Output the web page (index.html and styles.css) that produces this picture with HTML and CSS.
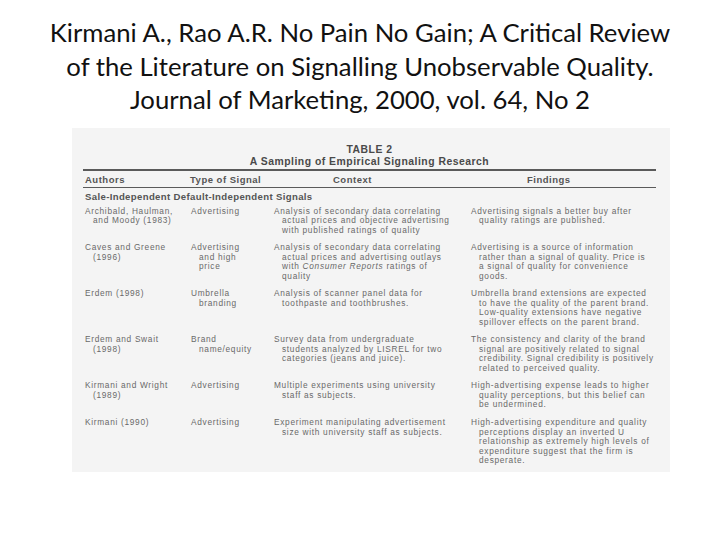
FILE: index.html
```html
<!DOCTYPE html>
<html>
<head>
<meta charset="utf-8">
<link rel="stylesheet" href="styles.css">
</head>
<body>
<div class="slide">
  <h1 class="title">Kirmani A., Rao A.R. No Pain No Gain; A Critical Review<br>of the Literature on Signalling Unobservable Quality.<br>Journal of Marketing, 2000, vol. 64, No 2</h1>
  <div class="scan">
    <div class="caption">TABLE 2<br>A Sampling of Empirical Signaling Research</div>
    <div class="rule"></div>
    <div class="head grid">
      <div class="h-authors">Authors</div>
      <div class="h-type">Type of Signal</div>
      <div class="h-context">Context</div>
      <div class="h-findings">Findings</div>
    </div>
    <div class="rule thin"></div>
    <div class="section">Sale-Independent Default-Independent Signals</div>
    <div class="body grid">
      <div class="c">Archibald, Haulman,<br>and Moody (1983)</div>
      <div class="c">Advertising</div>
      <div class="c">Analysis of secondary data correlating<br>actual prices and objective advertising<br>with published ratings of quality</div>
      <div class="c">Advertising signals a better buy after<br>quality ratings are published.</div>

      <div class="c">Caves and Greene<br>(1996)</div>
      <div class="c">Advertising<br>and high<br>price</div>
      <div class="c">Analysis of secondary data correlating<br>actual prices and advertising outlays<br>with <i>Consumer Reports</i> ratings of<br>quality</div>
      <div class="c">Advertising is a source of information<br>rather than a signal of quality. Price is<br>a signal of quality for convenience<br>goods.</div>

      <div class="c">Erdem (1998)</div>
      <div class="c">Umbrella<br>branding</div>
      <div class="c">Analysis of scanner panel data for<br>toothpaste and toothbrushes.</div>
      <div class="c">Umbrella brand extensions are expected<br>to have the quality of the parent brand.<br>Low-quality extensions have negative<br>spillover effects on the parent brand.</div>

      <div class="c">Erdem and Swait<br>(1998)</div>
      <div class="c">Brand<br>name/equity</div>
      <div class="c">Survey data from undergraduate<br>students analyzed by LISREL for two<br>categories (jeans and juice).</div>
      <div class="c">The consistency and clarity of the brand<br>signal are positively related to signal<br>credibility. Signal credibility is positively<br>related to perceived quality.</div>

      <div class="c">Kirmani and Wright<br>(1989)</div>
      <div class="c">Advertising</div>
      <div class="c">Multiple experiments using university<br>staff as subjects.</div>
      <div class="c">High-advertising expense leads to higher<br>quality perceptions, but this belief can<br>be undermined.</div>

      <div class="c">Kirmani (1990)</div>
      <div class="c">Advertising</div>
      <div class="c">Experiment manipulating advertisement<br>size with university staff as subjects.</div>
      <div class="c">High-advertising expenditure and quality<br>perceptions display an inverted U<br>relationship as extremely high levels of<br>expenditure suggest that the firm is<br>desperate.</div>
    </div>
  </div>
</div>
</body>
</html>
```

FILE: styles.css
```css
html, body {
  margin: 0;
  padding: 0;
  background: #ffffff;
}
.slide {
  width: 720px;
  height: 540px;
  display: flex;
  flex-direction: column;
  align-items: flex-start;
}
.title {
  align-self: stretch;
  margin: 0;
  padding-top: 16px;
  font-family: Lato, "Open Sans", sans-serif;
  font-weight: normal;
  font-size: 25.7px;
  line-height: 33.5px;
  text-align: center;
  color: #111;
}
.scan {
  margin-top: 11px;
  margin-left: 72px;
  width: 598px;
  height: 344px;
  box-sizing: border-box;
  padding: 16px 14px 0 11px;
  background: #f4f4f4;
  font-family: "Liberation Sans", Arial, sans-serif;
  color: #696969;
}
.caption {
  text-align: center;
  font-weight: bold;
  font-size: 10.4px;
  letter-spacing: 0.5px;
  line-height: 12px;
  color: #4a4a4a;
}
.rule {
  margin-top: 1px;
  height: 2px;
  background: #5a5a5a;
}
.rule.thin {
  margin-top: 0;
  height: 1.5px;
}
.grid {
  display: grid;
  grid-template-columns: 107px 82px 197px 187px;
}
.head {
  padding: 4px 0 2px;
  font-size: 9.5px;
  letter-spacing: 0.5px;
  line-height: 10px;
  font-weight: bold;
  color: #555;
}
.h-authors { padding-left: 2px; }
.h-type { padding-left: 0; }
.h-context { padding-left: 61px; }
.h-findings { padding-left: 58px; }
.section {
  margin-top: 4px;
  padding-left: 2px;
  font-size: 9.6px;
  letter-spacing: 0.35px;
  line-height: 10px;
  font-weight: bold;
  color: #555;
}
.body {
  margin-top: 4.6px;
  row-gap: 8.1px;
  font-size: 8.3px;
  letter-spacing: 0.7px;
  line-height: 9.5px;
}
.c {
  padding-left: 10px;
  text-indent: -8px;
  white-space: nowrap;
}
.body .c:nth-child(4n+2) { padding-left: 9px; }
```
